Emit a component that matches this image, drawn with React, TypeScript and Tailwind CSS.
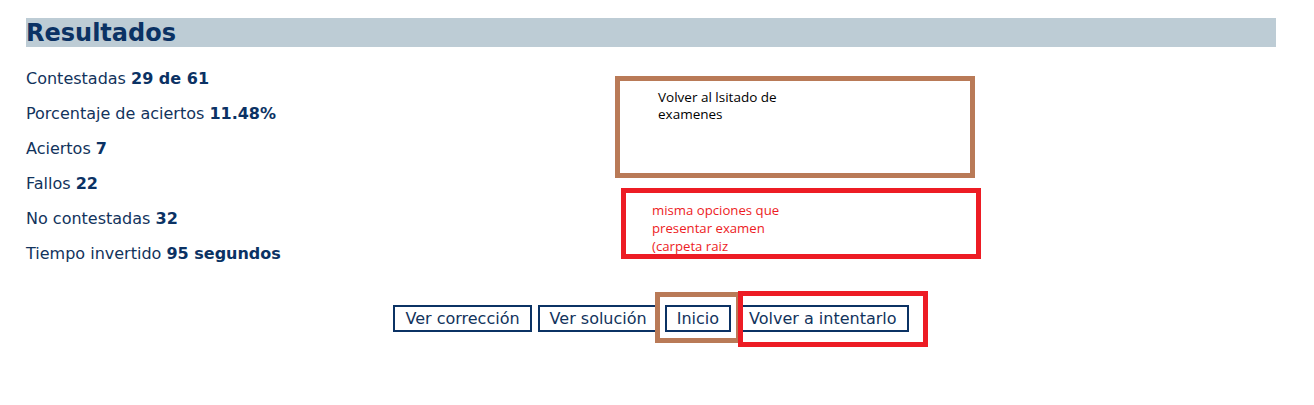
import React from "react";

type Stat = { label: string; value: string };

const stats: Stat[] = [
  { label: "Contestadas", value: "29 de 61" },
  { label: "Porcentaje de aciertos", value: "11.48%" },
  { label: "Aciertos", value: "7" },
  { label: "Fallos", value: "22" },
  { label: "No contestadas", value: "32" },
  { label: "Tiempo invertido", value: "95 segundos" },
];

const buttons = ["Ver corrección", "Ver solución", "Inicio", "Volver a intentarlo"];

const App: React.FC = () => {
  return (
    <div className="relative w-[1314px] h-[405px] bg-white overflow-hidden font-['DejaVu_Sans',Verdana,sans-serif]">
      <div className="ml-[26px] pt-[18px] w-[1250px]">
        <h1 className="h-[29px] bg-[#bdccd5] text-[24px] leading-[30px] font-bold text-[#0b3264]">
          Resultados
        </h1>

        <div className="mt-[14px] flex flex-col">
          {stats.map((s) => (
            <p key={s.label} className="h-[35px] leading-[35px] text-[16px] text-[#12335c]">
              {s.label} <b className="font-bold text-[#0b3264]">{s.value}</b>
            </p>
          ))}
        </div>

        <div className="mt-[34px] flex justify-center gap-[6px]">
          {buttons.map((b) => (
            <button
              key={b}
              className="h-[27px] border-2 border-[#0b3264] bg-white px-[10px] text-[16px] leading-[23px] text-[#12335c]"
            >
              {b}
            </button>
          ))}
        </div>
      </div>

      {/* annotations drawn over the page */}
      <div className="absolute left-[615px] top-[76px] w-[360px] h-[102px] border-[5px] border-[#b97a57] pl-[38px] pt-[8px] font-['Open_Sans',sans-serif] text-[13.5px] leading-[17px] text-black">
        Volver al lsitado de
        <br />
        examenes
      </div>
      <div className="absolute left-[621px] top-[188px] w-[360px] h-[71px] border-[5px] border-[#ed1c24] pl-[26px] pt-[8px] font-['Open_Sans',sans-serif] text-[13.2px] leading-[18px] text-[#ed1c24]">
        misma opciones que
        <br />
        presentar examen
        <br />
        (carpeta raiz
      </div>
      <div className="absolute left-[655px] top-[292px] w-[86px] h-[51px] border-[5px] border-[#b97a57]" />
      <div className="absolute left-[738px] top-[291px] w-[190px] h-[56px] border-[5px] border-[#ed1c24]" />
    </div>
  );
};

export default App;
